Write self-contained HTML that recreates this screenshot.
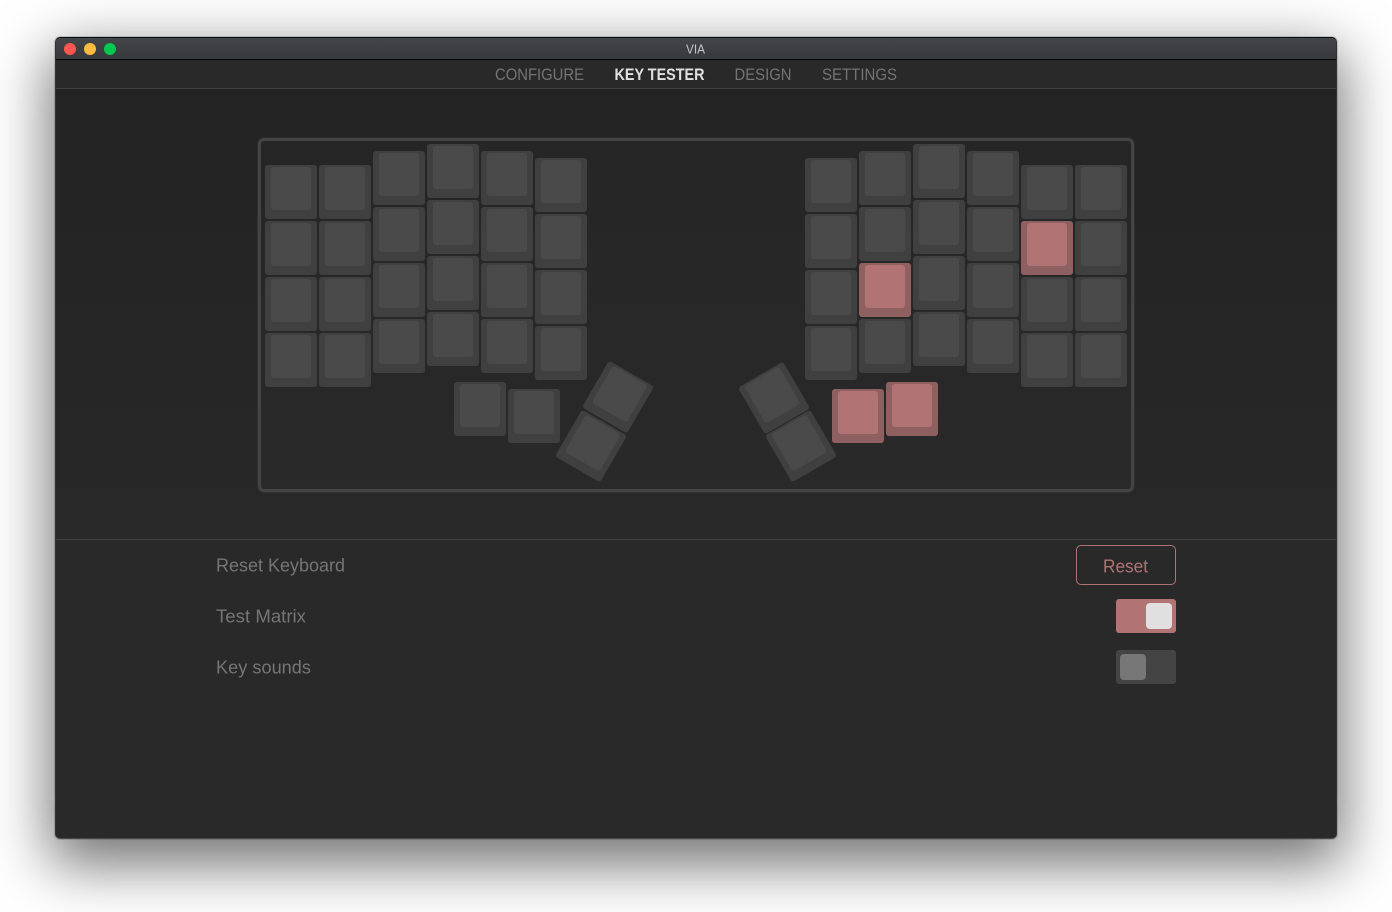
<!DOCTYPE html>
<html>
<head>
<meta charset="utf-8">
<style>
html,body{margin:0;padding:0;width:1392px;height:912px;background:#fff;overflow:hidden;font-family:"Liberation Sans",sans-serif}
.win{position:absolute;left:55px;top:37px;width:1282px;height:802px;border-radius:5px;box-shadow:0 20px 58px 6px rgba(0,0,0,.55),0 0 0 1px rgba(0,0,0,.15)}
.abs{position:absolute}
.body{left:55px;top:37px;width:1282px;height:802px;border-radius:5px;background:#292929;overflow:hidden;box-sizing:border-box;border:1px solid #333;border-top-color:#0c0c0c;border-bottom-color:#484848}
.title{left:56px;top:38px;width:1280px;height:21px;background:linear-gradient(#434648,#37393b);border-radius:4px 4px 0 0}
.tline{left:56px;top:59px;width:1280px;height:1px;background:#050505}
.nav{left:56px;top:60px;width:1280px;height:28px;background:#292929}
.nline{left:56px;top:88px;width:1280px;height:1px;background:#414141}
.main{left:56px;top:89px;width:1280px;height:450px;background:linear-gradient(#232323,#282828)}
.bline{left:56px;top:539px;width:1280px;height:1px;background:#414141}
.dot{position:absolute;width:12px;height:12px;border-radius:50%;top:43px}
.frame{left:258px;top:138px;width:876px;height:354px;box-sizing:border-box;border:3px solid #444;border-radius:6px;background:rgba(255,255,255,.012);box-shadow:0 0 0 1px rgba(68,68,68,.35)}
.k{position:absolute;display:block;width:52px;height:54px;background:#404040;border-radius:3px}
.k::after{content:"";position:absolute;left:6px;top:2px;width:40px;height:43px;background:#4a4a4a;border-radius:3px}
.p{background:#8f6060}
.p::after{background:#b27374}
.r1{transform:rotate(30deg)}
.r2{transform:rotate(-30deg)}
.btn{left:1076px;top:545px;width:100px;height:40px;box-sizing:border-box;border:1px solid #b27374;border-radius:5px}
.t{position:absolute;width:60px;height:34px;left:1116px;border-radius:3px}
.kn{position:absolute;width:26px;height:26px;border-radius:4px}
svg{position:absolute;left:0;top:0}
text{font-family:"Liberation Sans",sans-serif}
</style>
</head>
<body>
<div class="win"></div>
<div class="abs body"></div>
<div class="abs title"></div>
<div class="abs tline"></div>
<div class="abs nav"></div>
<div class="abs nline"></div>
<div class="abs main"></div>
<div class="abs bline"></div>
<div class="dot" style="left:64px;background:#fc5753"></div>
<div class="dot" style="left:84px;background:#fdbc40"></div>
<div class="dot" style="left:104px;background:#00c950"></div>
<div class="abs frame"></div>

<i class="k" style="left:265px;top:165px"></i><i class="k" style="left:265px;top:221px"></i><i class="k" style="left:265px;top:277px"></i><i class="k" style="left:265px;top:333px"></i>
<i class="k" style="left:319px;top:165px"></i><i class="k" style="left:319px;top:221px"></i><i class="k" style="left:319px;top:277px"></i><i class="k" style="left:319px;top:333px"></i>
<i class="k" style="left:373px;top:151px"></i><i class="k" style="left:373px;top:207px"></i><i class="k" style="left:373px;top:263px"></i><i class="k" style="left:373px;top:319px"></i>
<i class="k" style="left:427px;top:144px"></i><i class="k" style="left:427px;top:200px"></i><i class="k" style="left:427px;top:256px"></i><i class="k" style="left:427px;top:312px"></i>
<i class="k" style="left:481px;top:151px"></i><i class="k" style="left:481px;top:207px"></i><i class="k" style="left:481px;top:263px"></i><i class="k" style="left:481px;top:319px"></i>
<i class="k" style="left:535px;top:158px"></i><i class="k" style="left:535px;top:214px"></i><i class="k" style="left:535px;top:270px"></i><i class="k" style="left:535px;top:326px"></i>

<i class="k" style="left:805px;top:158px"></i><i class="k" style="left:805px;top:214px"></i><i class="k" style="left:805px;top:270px"></i><i class="k" style="left:805px;top:326px"></i>
<i class="k" style="left:859px;top:151px"></i><i class="k" style="left:859px;top:207px"></i><i class="k p" style="left:859px;top:263px"></i><i class="k" style="left:859px;top:319px"></i>
<i class="k" style="left:913px;top:144px"></i><i class="k" style="left:913px;top:200px"></i><i class="k" style="left:913px;top:256px"></i><i class="k" style="left:913px;top:312px"></i>
<i class="k" style="left:967px;top:151px"></i><i class="k" style="left:967px;top:207px"></i><i class="k" style="left:967px;top:263px"></i><i class="k" style="left:967px;top:319px"></i>
<i class="k" style="left:1021px;top:165px"></i><i class="k p" style="left:1021px;top:221px"></i><i class="k" style="left:1021px;top:277px"></i><i class="k" style="left:1021px;top:333px"></i>
<i class="k" style="left:1075px;top:165px"></i><i class="k" style="left:1075px;top:221px"></i><i class="k" style="left:1075px;top:277px"></i><i class="k" style="left:1075px;top:333px"></i>

<i class="k" style="left:454px;top:382px"></i>
<i class="k" style="left:508px;top:389px"></i>
<i class="k r1" style="left:592px;top:369.5px"></i>
<i class="k r1" style="left:564.5px;top:418.5px"></i>
<i class="k r2" style="left:747.5px;top:370.5px"></i>
<i class="k r2" style="left:775px;top:419px"></i>
<i class="k p" style="left:832px;top:389px"></i>
<i class="k p" style="left:886px;top:382px"></i>

<div class="abs btn"></div>
<div class="t" style="top:599px;background:#b27374"><div class="kn" style="left:30px;top:4px;background:#e0e0e0"></div></div>
<div class="t" style="top:650px;background:#444"><div class="kn" style="left:4px;top:4px;background:#777"></div></div>

<svg width="1392" height="912" xmlns="http://www.w3.org/2000/svg">
<text x="686" y="53.5" font-size="12.5" fill="#c4c6c7" textLength="19" lengthAdjust="spacingAndGlyphs">VIA</text>
<text x="495" y="80" font-size="16.5" fill="#747474" textLength="89" lengthAdjust="spacingAndGlyphs">CONFIGURE</text>
<text x="614.5" y="80" font-size="16.5" font-weight="bold" fill="#e0e0e0" textLength="90" lengthAdjust="spacingAndGlyphs">KEY TESTER</text>
<text x="734.5" y="80" font-size="16.5" fill="#747474" textLength="57" lengthAdjust="spacingAndGlyphs">DESIGN</text>
<text x="822" y="80" font-size="16.5" fill="#747474" textLength="75" lengthAdjust="spacingAndGlyphs">SETTINGS</text>
<text x="216" y="571.5" font-size="18.5" fill="#757575" textLength="129" lengthAdjust="spacingAndGlyphs">Reset Keyboard</text>
<text x="216" y="622.5" font-size="18.5" fill="#757575" textLength="90" lengthAdjust="spacingAndGlyphs">Test Matrix</text>
<text x="216" y="673.5" font-size="18.5" fill="#757575" textLength="95" lengthAdjust="spacingAndGlyphs">Key sounds</text>
<text x="1103" y="572.5" font-size="18.5" fill="#b27374" textLength="45" lengthAdjust="spacingAndGlyphs">Reset</text>
</svg>
</body>
</html>
